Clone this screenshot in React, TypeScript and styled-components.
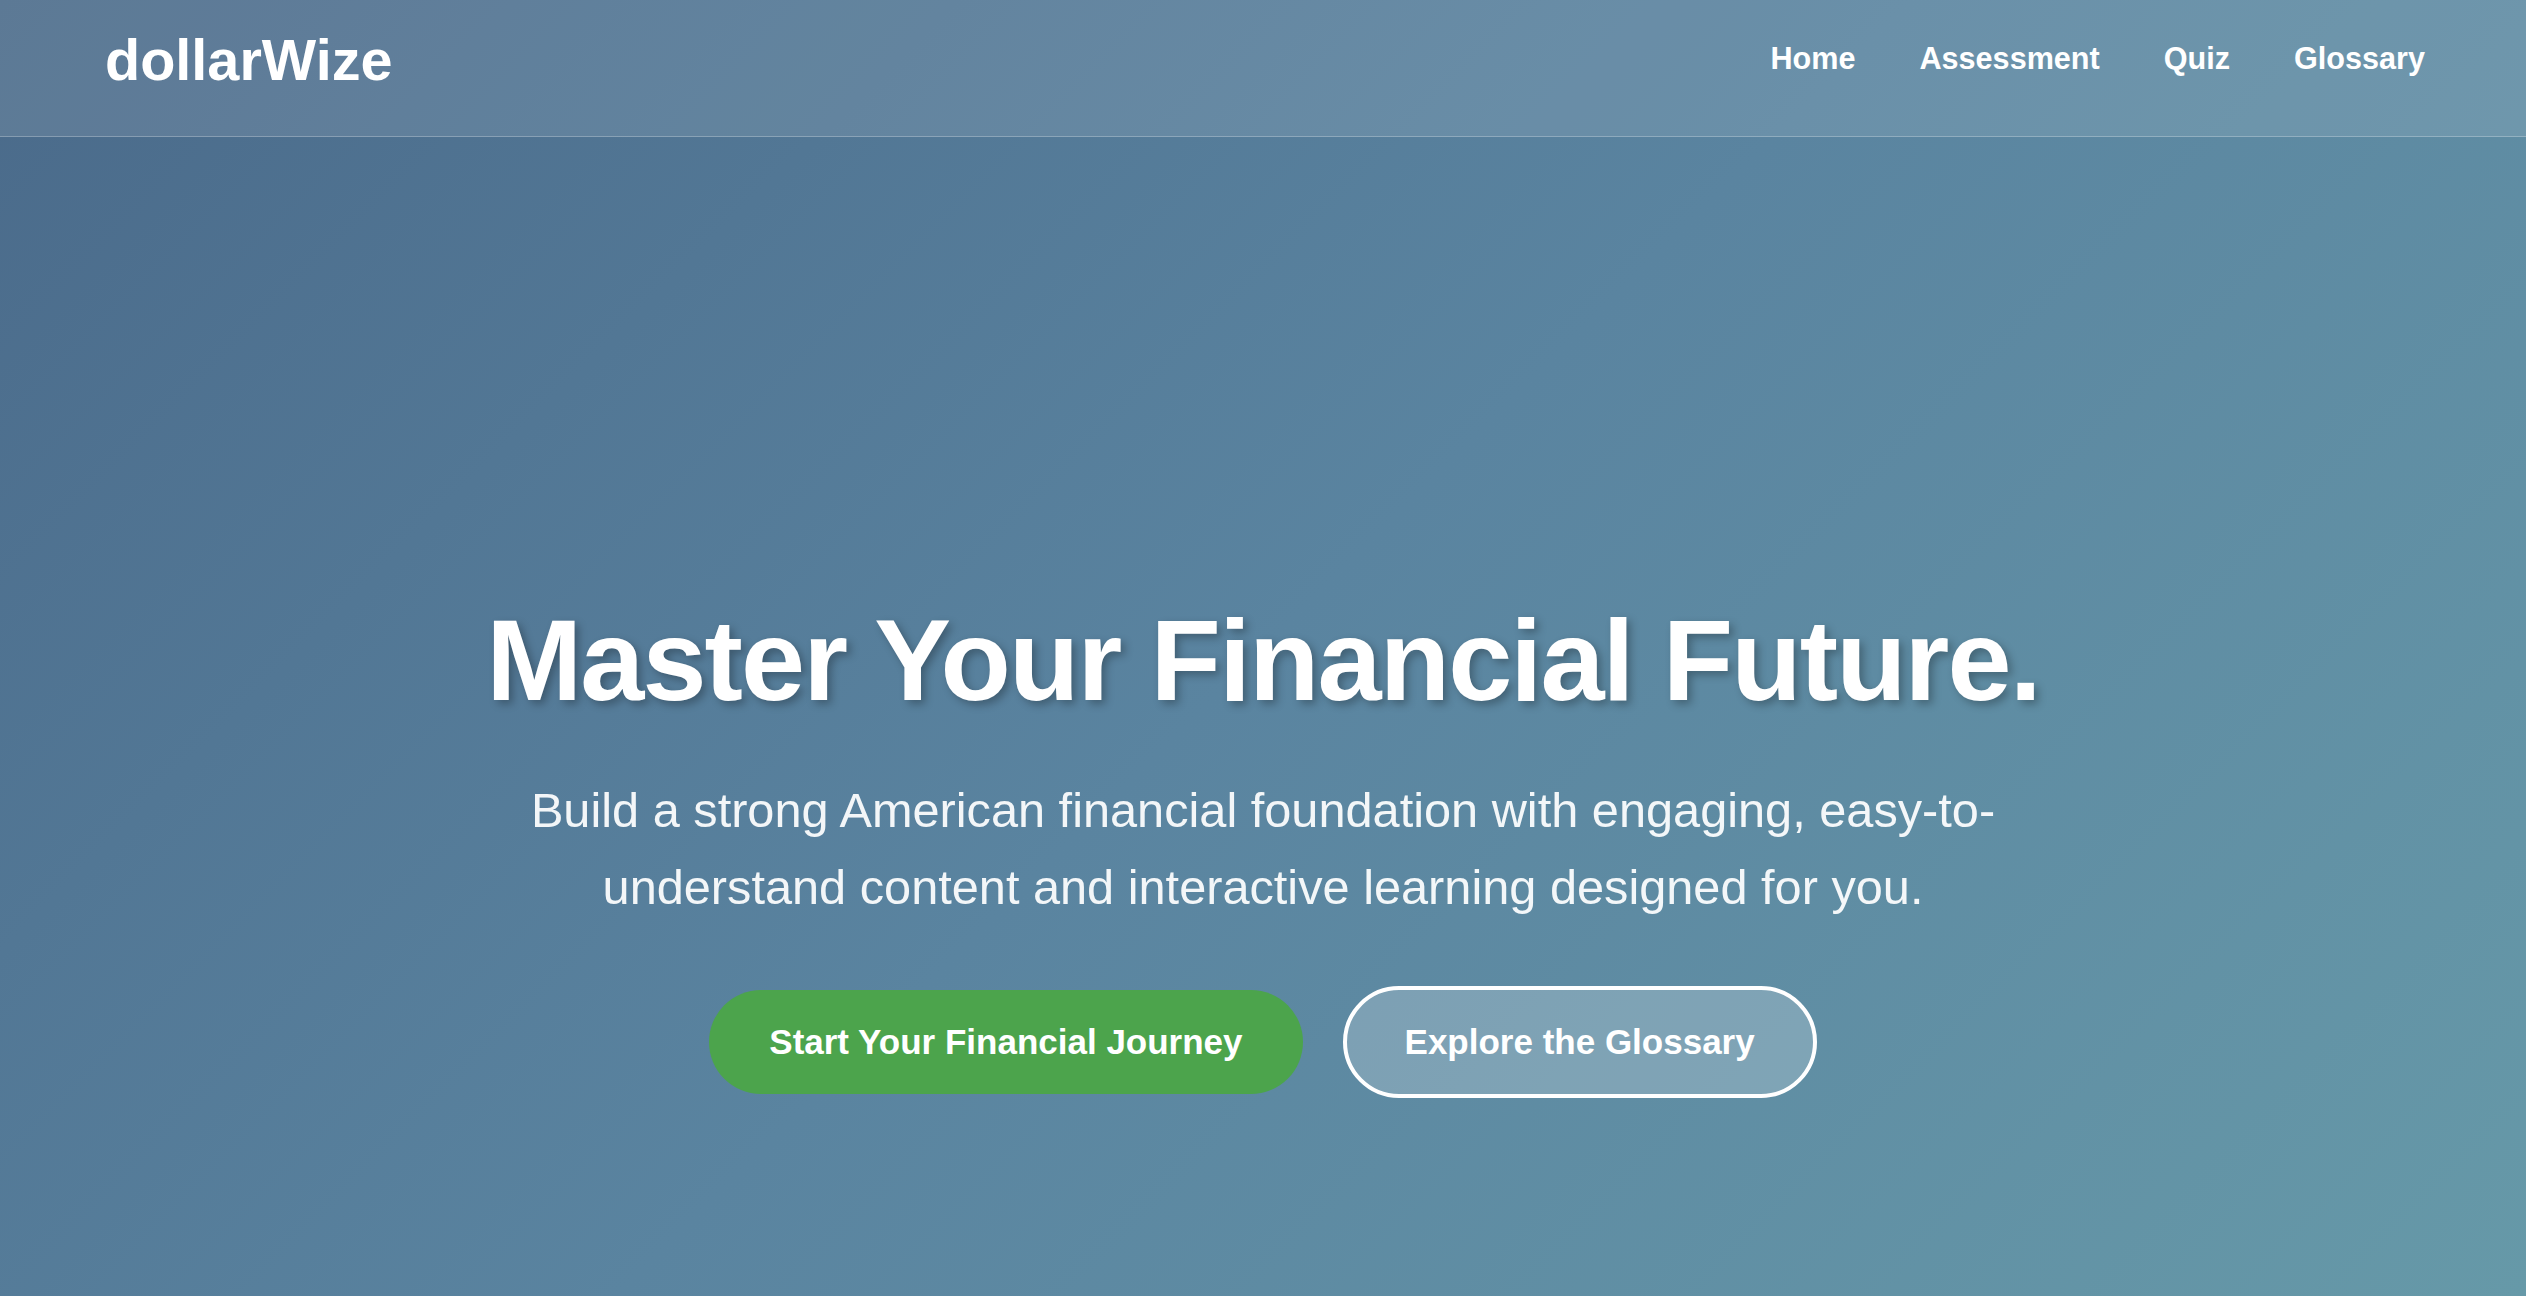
import * as React from "react";
import styled, { createGlobalStyle } from "styled-components";

const GlobalStyle = createGlobalStyle`
  html, body {
    margin: 0;
    padding: 0;
  }
  body {
    min-height: 100vh;
    font-family: "Liberation Sans", Arial, Helvetica, sans-serif;
    color: #ffffff;
    background: linear-gradient(135deg, #4a6a8a 0%, #5a84a0 50%, #6699a8 100%);
    background-attachment: fixed;
  }
  * {
    box-sizing: border-box;
  }
`;

const Page = styled.div`
  min-height: 100vh;
  display: flex;
  flex-direction: column;
`;

const Header = styled.header`
  height: 137px;
  display: flex;
  align-items: center;
  justify-content: space-between;
  padding: 0 101px 0 105px;
  background: rgba(255, 255, 255, 0.1);
  border-bottom: 1px solid rgba(255, 255, 255, 0.25);
`;

const Logo = styled.a`
  font-size: 57.6px;
  font-weight: 700;
  color: #ffffff;
  text-decoration: none;
  margin-top: -16px;
`;

const Nav = styled.nav`
  display: flex;
  gap: 64px;
  margin-top: -20px;
`;

const NavLink = styled.a`
  font-size: 30.6px;
  font-weight: 700;
  color: #ffffff;
  text-decoration: none;
`;

const Hero = styled.main`
  flex: 1;
  display: flex;
  flex-direction: column;
  align-items: center;
  text-align: center;
  padding: 454px 40px 0;
`;

const Title = styled.h1`
  margin: 0 0 43px;
  font-size: 115.2px;
  line-height: 1.2;
  font-weight: 700;
  letter-spacing: -1.9px;
  text-shadow: 4px 4px 8px rgba(0, 0, 0, 0.28);
`;

const Subtitle = styled.p`
  margin: 0 0 60px;
  max-width: 1570px;
  font-size: 48.7px;
  line-height: 76.8px;
  color: rgba(255, 255, 255, 0.93);
`;

const Actions = styled.div`
  display: flex;
  align-items: center;
  gap: 40px;
`;

const Button = styled.a<{ $variant: "primary" | "outline" }>`
  display: inline-flex;
  align-items: center;
  justify-content: center;
  font-size: 35px;
  font-weight: 700;
  line-height: 40px;
  color: #ffffff;
  text-decoration: none;
  border-radius: 60px;
  padding: ${({ $variant }) => ($variant === "primary" ? "32px 60px" : "32px 58px")};
  background: ${({ $variant }) =>
    $variant === "primary" ? "#4ca44c" : "rgba(255, 255, 255, 0.2)"};
  border: ${({ $variant }) =>
    $variant === "primary" ? "none" : "4px solid #ffffff"};
`;

export default function App() {
  return (
    <>
      <GlobalStyle />
      <Page>
        <Header>
          <Logo href="#">dollarWize</Logo>
          <Nav>
            <NavLink href="#">Home</NavLink>
            <NavLink href="#">Assessment</NavLink>
            <NavLink href="#">Quiz</NavLink>
            <NavLink href="#">Glossary</NavLink>
          </Nav>
        </Header>
        <Hero>
          <Title>Master Your Financial Future.</Title>
          <Subtitle>
            Build a strong American financial foundation with engaging,
            easy-to-understand content and interactive learning designed for
            you.
          </Subtitle>
          <Actions>
            <Button $variant="primary" href="#">
              Start Your Financial Journey
            </Button>
            <Button $variant="outline" href="#">
              Explore the Glossary
            </Button>
          </Actions>
        </Hero>
      </Page>
    </>
  );
}
